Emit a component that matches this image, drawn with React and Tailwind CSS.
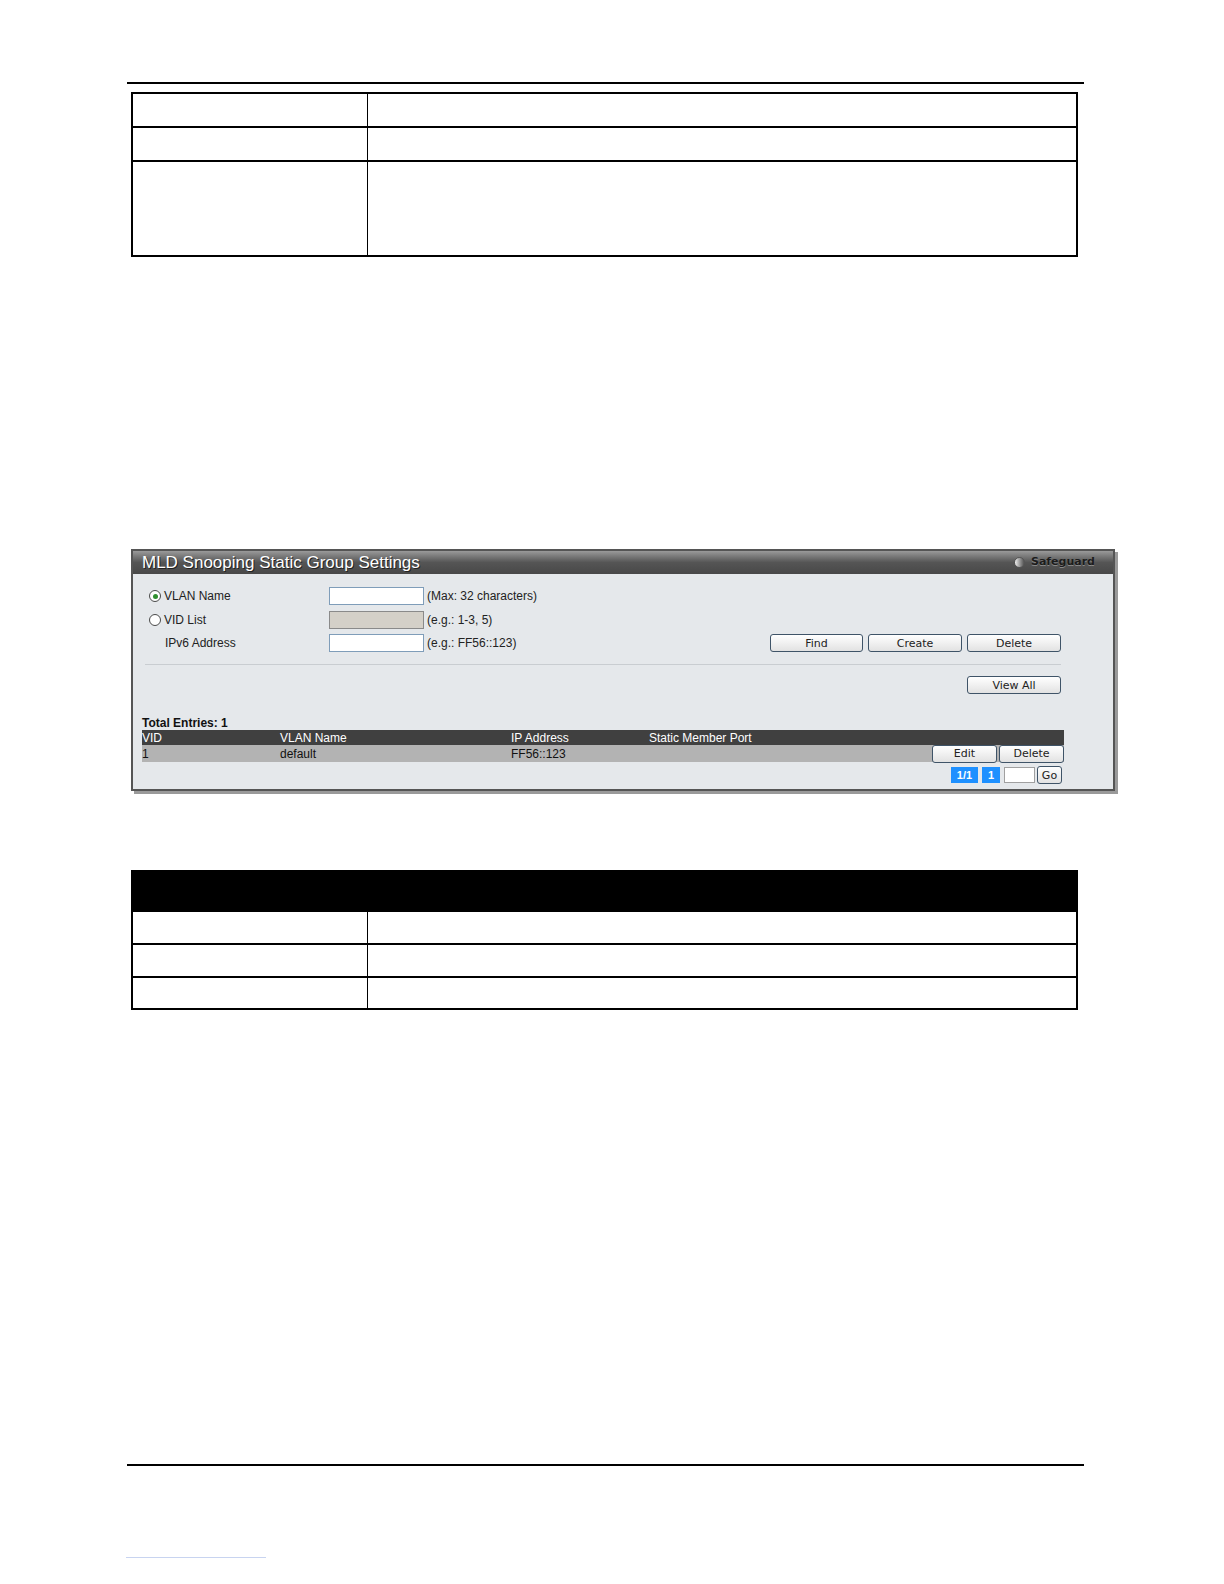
const sans = { fontFamily: '"Liberation Sans", Arial, sans-serif' };
const tah = { fontFamily: '"DejaVu Sans", Verdana, sans-serif' };

function Btn({ children, className = '' }) {
  return (
    <button
      style={tah}
      className={`flex h-[18px] items-center justify-center rounded-[3px] border border-[#3f5468] bg-gradient-to-b from-white to-[#e2e2e2] text-[11px] leading-none text-[#222] ${className}`}
    >
      {children}
    </button>
  );
}

function Radio({ checked }) {
  return (
    <span className="flex h-[12px] w-[12px] items-center justify-center rounded-full border border-[#4a4a4a] bg-white">
      {checked && <span className="h-[5px] w-[5px] rounded-full bg-[#2f8f2f]" />}
    </span>
  );
}

function DocTable({ rows, header }) {
  return (
    <div className="ml-[131px] w-[947px] border-2 border-black">
      {header && <div className="h-[38px] bg-black" />}
      {rows.map((h, i) => (
        <div
          key={i}
          className={`flex ${i > 0 || header ? 'border-t-2 border-black' : ''}`}
          style={{ height: h + (i > 0 || header ? 2 : 0) }}
        >
          <div className="w-[235px] border-r border-black" />
          <div className="flex-1" />
        </div>
      ))}
    </div>
  );
}

export default function App() {
  return (
    <div className="relative h-[1584px] w-[1224px] overflow-hidden bg-white" style={sans}>
      <div className="h-[82px]" />
      <div className="ml-[127px] h-[2px] w-[957px] bg-black" />
      <div className="h-[8px]" />
      <DocTable rows={[32, 32, 93]} />

      <div className="h-[292px]" />

      {/* panel screenshot */}
      <div className="ml-[131px] w-[984px] border-2 border-[#555] shadow-[3px_3px_0_#9a9a9a]">
        <div className="flex h-[23px] items-center justify-between bg-gradient-to-b from-[#9a9a9a] via-[#555] to-[#484848] pl-[9px] pr-[18px]">
          <span className="text-[17px] leading-none text-white [text-shadow:1px_1px_0_#222]">
            MLD Snooping Static Group Settings
          </span>
          <span className="flex items-center gap-[6px] text-[11px] font-bold text-[#1c1c1c] [text-shadow:0_1px_0_#8a8a8a]" style={tah}>
            <span className="h-[11px] w-[11px] rounded-full border border-[#555] bg-gradient-to-r from-[#f0f0f0] to-[#555]" />
            Safeguard
          </span>
        </div>

        <div className="bg-[#e5e8eb] pb-[6px] pl-[9px] pr-[49px] pt-[13px] text-[12px] text-[#222]">
          <div className="flex h-[18px] items-center">
            <div className="flex w-[187px] items-center gap-[3px] pl-[7px]">
              <Radio checked /> <span>VLAN Name</span>
            </div>
            <div className="h-[18px] w-[95px] border border-[#7f9db9] bg-white" />
            <span className="ml-[3px]">(Max: 32 characters)</span>
          </div>
          <div className="mt-[6px] flex h-[18px] items-center">
            <div className="flex w-[187px] items-center gap-[3px] pl-[7px]">
              <Radio /> <span>VID List</span>
            </div>
            <div className="h-[18px] w-[95px] border border-[#8a8a8a] bg-[#d4d0c8]" />
            <span className="ml-[3px]">(e.g.: 1-3, 5)</span>
          </div>
          <div className="mt-[5px] flex h-[18px] items-center">
            <div className="w-[187px] pl-[23px]">IPv6 Address</div>
            <div className="h-[18px] w-[95px] border border-[#7f9db9] bg-white" />
            <span className="ml-[3px]">(e.g.: FF56::123)</span>
            <div className="ml-auto mr-[3px] flex gap-[5px]">
              <Btn className="w-[93px]">Find</Btn>
              <Btn className="w-[94px]">Create</Btn>
              <Btn className="w-[94px]">Delete</Btn>
            </div>
          </div>
          <div className="ml-[3px] mr-[3px] mt-[12px] h-px bg-[#c9cdd1]" />
          <div className="mt-[11px] flex justify-end pr-[3px]">
            <Btn className="w-[94px]">View All</Btn>
          </div>

          <div className="mt-[22px] text-[12px] font-bold leading-[14px] text-[#111]">Total Entries: 1</div>
          <div className="flex h-[15px] items-center bg-[#404040] text-[12px] text-white">
            <span className="w-[138px]">VID</span>
            <span className="w-[231px]">VLAN Name</span>
            <span className="w-[138px]">IP Address</span>
            <span>Static Member Port</span>
          </div>
          <div className="flex h-[17px] items-center bg-[#b3b3b3] text-[12px] text-[#111]">
            <span className="w-[138px]">1</span>
            <span className="w-[231px]">default</span>
            <span className="w-[138px]">FF56::123</span>
            <div className="ml-auto flex gap-[2px]">
              <Btn className="h-[16px] w-[65px]">Edit</Btn>
              <Btn className="h-[16px] w-[65px]">Delete</Btn>
            </div>
          </div>
          <div className="mt-[5px] flex h-[16px] items-center justify-end gap-[4px] pr-[2px]">
            <span className="flex h-[16px] w-[27px] items-center justify-center bg-[#1e90ff] text-[11px] font-bold text-white">1/1</span>
            <span className="flex h-[16px] w-[18px] items-center justify-center bg-[#1e90ff] text-[11px] font-bold text-white">1</span>
            <span className="h-[16px] w-[31px] border border-[#a0a0a0] bg-white" />
            <Btn className="-ml-[2px] h-[17px] w-[25px]">Go</Btn>
          </div>
        </div>
      </div>

      <div className="h-[79px]" />
      <DocTable header rows={[31, 31, 30]} />

      <div className="h-[454px]" />
      <div className="ml-[127px] h-[2px] w-[957px] bg-black" />
      <div className="h-[91px]" />
      <div className="ml-[126px] h-px w-[140px] bg-[#c8d4f0]" />
    </div>
  );
}
